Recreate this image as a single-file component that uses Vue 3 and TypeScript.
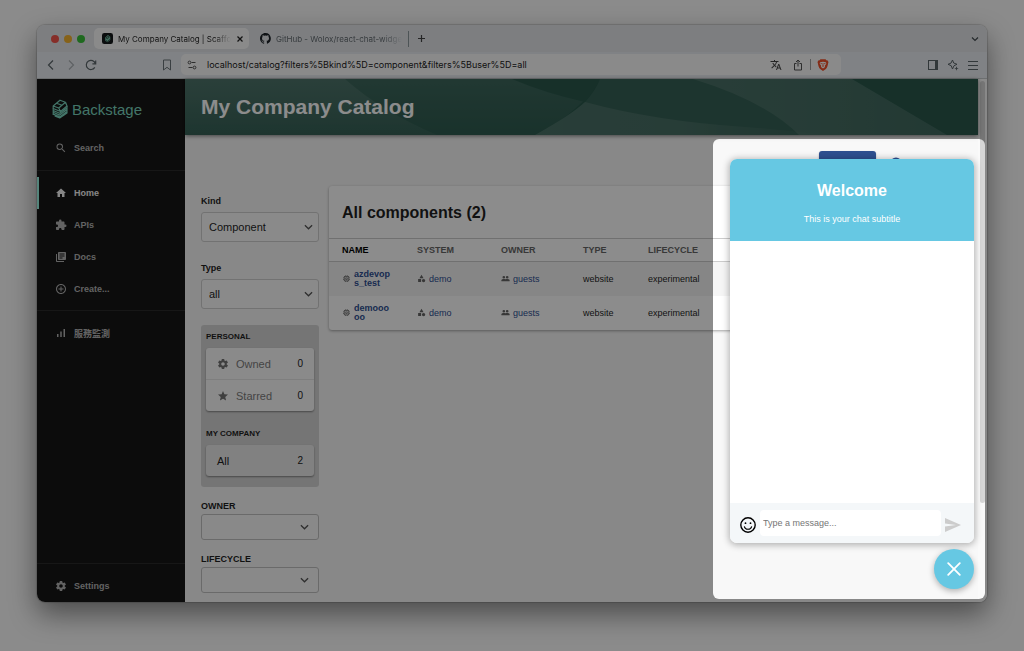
<script setup lang="ts">
import { ref } from 'vue'

interface NavItem { label: string; icon: string; active?: boolean }
interface Row { name: string; system: string; owner: string; type: string; lifecycle: string }

const icons: Record<string, string> = {
  search: 'M15.5 14h-.79l-.28-.27A6.47 6.47 0 0 0 16 9.5 6.5 6.5 0 1 0 9.5 16c1.61 0 3.09-.59 4.23-1.57l.27.28v.79l5 4.99L20.49 19l-4.99-5zm-6 0C7.01 14 5 11.99 5 9.5S7.01 5 9.5 5 14 7.01 14 9.5 11.99 14 9.5 14z',
  home: 'M10 20v-6h4v6h5v-8h3L12 3 2 12h3v8z',
  extension: 'M20.5 11H19V7c0-1.1-.9-2-2-2h-4V3.5a2.5 2.5 0 0 0-5 0V5H4c-1.1 0-1.99.9-1.99 2v3.8H3.5c1.49 0 2.7 1.21 2.7 2.7s-1.21 2.7-2.7 2.7H2V20c0 1.1.9 2 2 2h3.8v-1.5c0-1.49 1.21-2.7 2.7-2.7s2.7 1.21 2.7 2.7V22H17c1.1 0 2-.9 2-2v-4h1.5a2.5 2.5 0 0 0 0-5z',
  docs: 'M4 6H2v14c0 1.1.9 2 2 2h14v-2H4V6zm16-4H8c-1.1 0-2 .9-2 2v12c0 1.1.9 2 2 2h12c1.1 0 2-.9 2-2V4c0-1.1-.9-2-2-2zm-1 9H9V9h10v2zm-4 4H9v-2h6v2zm4-8H9V5h10v2z',
  create: 'M13 7h-2v4H7v2h4v4h2v-4h4v-2h-4V7zm-1-5C6.48 2 2 6.48 2 12s4.48 10 10 10 10-4.48 10-10S17.52 2 12 2zm0 18c-4.41 0-8-3.59-8-8s3.59-8 8-8 8 3.59 8 8-3.59 8-8 8z',
  bars: 'M4 14h3v6H4zM10.500 9h3v11h-3zM17 4h3v16h-3z',
  settings: 'M19.43 12.98c.04-.32.07-.64.07-.98s-.03-.66-.07-.98l2.110-1.650c.19-.15.24-.42.12-.64l-2-3.460c-.12-.22-.39-.3-.61-.22l-2.490 1c-.52-.4-1.080-.73-1.690-.98l-.38-2.650C14.460 2.180 14.250 2 14 2h-4c-.25 0-.46.18-.49.42l-.38 2.650c-.61.25-1.170.59-1.690.98l-2.490-1c-.23-.09-.49 0-.61.22l-2 3.460c-.13.22-.07.49.12.64l2.110 1.650c-.04.32-.07.65-.07.98s.03.66.07.98l-2.110 1.650c-.19.15-.24.42-.12.64l2 3.460c.12.22.39.3.61.22l2.490-1c.52.4 1.080.73 1.690.98l.38 2.650c.03.24.24.42.49.42h4c.25 0 .46-.18.49-.42l.38-2.650c.61-.25 1.170-.59 1.690-.98l2.490 1c.23.09.49 0 .61-.22l2-3.460c.12-.22.07-.49-.12-.64l-2.110-1.650zM12 15.500c-1.930 0-3.500-1.570-3.500-3.500s1.570-3.500 3.500-3.500 3.500 1.570 3.500 3.500-1.570 3.500-3.500 3.500z',
  star: 'M12 17.270L18.180 21l-1.640-7.030L22 9.240l-7.190-.61L12 2 9.190 8.630 2 9.240l5.460 4.730L5.820 21z',
  memory: 'M15 9H9v6h6V9zm-2 4h-2v-2h2v2zm8-2V9h-2V7c0-1.100-.9-2-2-2h-2V3h-2v2h-2V3H9v2H7c-1.100 0-2 .9-2 2v2H3v2h2v2H3v2h2v2c0 1.100.9 2 2 2h2v2h2v-2h2v2h2v-2h2c1.100 0 2-.9 2-2v-2h2v-2h-2v-2h2zm-4 6H7V7h10v10z',
  category: 'M12 2l-5.500 9h11zM17.500 13a4.500 4.500 0 1 0 0 9 4.500 4.500 0 0 0 0-9zM3 13.500h8v8H3z',
  people: 'M16.500 13c-1.200 0-3.070.34-4.500 1-1.430-.67-3.300-1-4.500-1C5.330 13 1 14.080 1 16.250V19h22v-2.750c0-2.170-4.330-3.250-6.500-3.250zM7.500 12a3.500 3.500 0 1 0 0-7 3.500 3.500 0 0 0 0 7zm9 0a3.500 3.500 0 1 0 0-7 3.500 3.500 0 0 0 0 7z',
  translate: 'M12.870 15.070l-2.540-2.510.03-.03A17.520 17.520 0 0 0 14.070 6H17V4h-7V2H8v2H1v2h11.170C11.500 7.920 10.440 9.750 9 11.350 8.070 10.320 7.300 9.190 6.690 8h-2c.73 1.630 1.730 3.170 2.980 4.560l-5.090 5.020L4 19l5-5 3.110 3.110.76-2.040zM18.500 10h-2L12 22h2l1.120-3h4.750L21 22h2l-4.500-12zm-2.620 7l1.620-4.330L19.120 17h-3.240z',
}

const mainNav: NavItem[] = [
  { label: 'Home', icon: 'home', active: true },
  { label: 'APIs', icon: 'extension' },
  { label: 'Docs', icon: 'docs' },
  { label: 'Create...', icon: 'create' },
]

const columns = ['NAME', 'SYSTEM', 'OWNER', 'TYPE', 'LIFECYCLE']
const rows: Row[] = [
  { name: 'azdevops_test', system: 'demo', owner: 'guests', type: 'website', lifecycle: 'experimental' },
  { name: 'demooooo', system: 'demo', owner: 'guests', type: 'website', lifecycle: 'experimental' },
]

const kind = ref('Component')
const type = ref('all')
const message = ref('')
</script>

<template>
  <div class="desktop">
    <div class="window">
      <div class="tabs">
        <span class="lights"><i class="red"></i><i class="yellow"></i><i class="green"></i></span>
        <div class="tab tab-active">
          <svg class="favicon" viewBox="0 0 12 12"><rect width="12" height="12" rx="2.500" fill="#15181a" /><path d="M3.500 5L6.500 2.300 9 4v3.500L6 10 3.500 8.500z" fill="#79c9ae" /><path d="M4.500 5.300l2.200-1.700 1.200.9-2.200 1.800zM4 8l2 1.200 2.700-2.200" fill="none" stroke="#15181a" stroke-width=".7" /></svg>
          <span class="tab-text">My Company Catalog | Scaffo</span>
          <button class="plain" aria-label="Close tab"><svg width="8" height="8" viewBox="0 0 8 8"><path d="M1.500 1.500l5 5M6.500 1.500l-5 5" stroke="#222" stroke-width="1.300" /></svg></button>
        </div>
        <div class="tab tab-idle">
          <svg class="favicon" viewBox="0 0 16 16"><path fill="#1d2227" d="M8 0C3.580 0 0 3.580 0 8c0 3.540 2.290 6.530 5.470 7.590.4.070.55-.17.55-.38v-1.490c-2.230.48-2.700-1.070-2.700-1.070-.36-.92-.89-1.170-.89-1.170-.73-.5.050-.49.050-.49.8.060 1.230.83 1.230.83.71 1.220 1.870.87 2.330.66.070-.52.28-.87.51-1.070-1.780-.2-3.640-.89-3.640-3.950 0-.87.31-1.590.82-2.150-.08-.2-.36-1.020.08-2.120 0 0 .67-.21 2.200.82a7.600 7.600 0 0 1 4 0c1.530-1.040 2.200-.82 2.200-.82.44 1.100.16 1.920.08 2.120.51.56.82 1.270.82 2.150 0 3.070-1.870 3.750-3.650 3.950.29.25.54.73.54 1.480v2.200c0 .21.15.46.55.38A8 8 0 0 0 8 0z" /></svg>
          <span class="tab-text">GitHub - Wolox/react-chat-widge</span>
        </div>
        <button class="plain new-tab" aria-label="New tab"><svg width="9" height="9" viewBox="0 0 9 9"><path d="M4.500 1v7M1 4.500h7" stroke="#444" stroke-width="1.200" /></svg></button>
        <button class="plain tab-menu" aria-label="Search tabs"><svg width="8" height="8" viewBox="0 0 8 8"><path d="M1 2.500l3 3 3-3" fill="none" stroke="#444b50" stroke-width="1.200" /></svg></button>
      </div>

      <div class="toolbar">
        <button class="plain" aria-label="Back"><svg width="12" height="12" viewBox="0 0 12 12"><path d="M8 1.500L3.500 6 8 10.500" fill="none" stroke="#5c666b" stroke-width="1.200" /></svg></button>
        <button class="plain" aria-label="Forward"><svg width="12" height="12" viewBox="0 0 12 12"><path d="M4 1.500L8.500 6 4 10.500" fill="none" stroke="#aab0b5" stroke-width="1.200" /></svg></button>
        <button class="plain" aria-label="Reload"><svg width="12" height="12" viewBox="0 0 12 12"><path d="M9.800 8.400A4.600 4.600 0 1 1 10.300 4.500M10.700 1.600v3.300H7.400" fill="none" stroke="#5c666b" stroke-width="1.200" /></svg></button>
        <button class="plain bookmark" aria-label="Bookmark"><svg width="12" height="12" viewBox="0 0 12 12"><path d="M2.500 1h7v10L6 8.300 2.500 11z" fill="none" stroke="#6b7479" /></svg></button>
        <div class="address">
          <svg width="10" height="10" viewBox="0 0 10 10" fill="none" stroke="#555"><path d="M4.500 2.500H8.500M1.500 7.500h4" /><circle cx="2.500" cy="2.500" r="1.400" /><circle cx="7.500" cy="7.500" r="1.400" /></svg>
          <input class="url" aria-label="Address" value="localhost/catalog?filters%5Bkind%5D=component&amp;filters%5Buser%5D=all" />
          <button class="plain" aria-label="Translate"><svg width="12" height="12" viewBox="0 0 24 24"><path :d="icons.translate" fill="#444" /></svg></button>
          <button class="plain" aria-label="Share"><svg width="12" height="12" viewBox="0 0 12 12" fill="none" stroke="#555"><path d="M4.500 4.500H2.500v6.500h7V4.500h-2M6 7.500V1M4 3l2-2 2 2" /></svg></button>
          <span class="bar"></span>
          <button class="plain" aria-label="Shields"><svg width="12" height="12" viewBox="0 0 12 12"><path d="M3.500.3h5L9.800 1.500l1 .1.700 1.600-.3.900c-.5 3-1.200 5-2.300 6L6 12 3.100 10.100C2 9.100 1.300 7.100.8 4.100l-.3-.9.700-1.600 1-.1z" fill="#f0502a" /><path d="M3 3.200l3-.4 3 .4.300 1.600-1.500 2L8 8 6 9.500 4 8l.2-1.200-1.500-2z" fill="#fff" /><path d="M3.500 4.300l1.500.5M8.500 4.300L7 4.800M6 4v2.800M5 7.400l1-.6 1 .6" stroke="#f0502a" stroke-width=".8" fill="none" /></svg></button>
        </div>
        <span class="tools">
          <button class="plain" aria-label="Side panel"><svg width="12" height="12" viewBox="0 0 12 12"><rect x="1.500" y="1.500" width="9" height="9" fill="none" stroke="#5c666b" /><path d="M8 2h3v8H8z" fill="#5c666b" /></svg></button>
          <button class="plain" aria-label="Assistant"><svg width="12" height="12" viewBox="0 0 12 12"><path d="M5.500 1l1.200 3L10 5.300 7 6.700 5.500 10 4.200 6.700 1 5.300l3-1.200z" fill="none" stroke="#5c666b" /><path d="M9.500 7.300l.6 1.600 1.600.6-1.600.6-.6 1.600-.6-1.600-1.600-.6 1.600-.6z" fill="#5c666b" /></svg></button>
          <button class="plain" aria-label="Menu"><svg width="12" height="12" viewBox="0 0 12 12"><path d="M1 2.500h10M1 6.500h10M1 10.500h10" stroke="#5c666b" /></svg></button>
        </span>
      </div>

      <div class="viewport">
        <nav class="sidebar">
          <a class="logo" href="#">
            <svg width="16" height="20" viewBox="0 0 16 20" fill="none" stroke-width="1.200" stroke-linejoin="round"><path d="M1.200 7L8 1.200l5.500 2L15 7l-6.500 5.500L1.200 9.500zM1.200 7l5.500 2 6.800-5.800M6.700 9l1.800 3.500M4.500 4.200l5.500 2" /><path d="M1.200 11.500l6.500 2.800L15 8.800M1.200 13.300l6.500 2.800 7.300-5.500M1.200 15.100l6.500 2.800 7.300-5.500M1.200 9.500v6.500M15 7v7l-7.300 5-5-2" /></svg>
            <span>Backstage</span>
          </a>
          <a class="nav-item" href="#"><svg class="nav-icon" viewBox="0 0 24 24"><path :d="icons.search" /></svg>Search</a>
          <hr />
          <a v-for="item in mainNav" :key="item.label" class="nav-item" :class="{ active: item.active }" href="#">
            <svg class="nav-icon" viewBox="0 0 24 24"><path :d="icons[item.icon]" /></svg>{{ item.label }}
          </a>
          <hr class="low" />
          <a class="nav-item" href="#"><svg class="nav-icon" viewBox="0 0 24 24"><path :d="icons.bars" /></svg>服務監測</a>
          <span class="spacer"></span>
          <hr />
          <a class="nav-item" href="#"><svg class="nav-icon" viewBox="0 0 24 24"><path :d="icons.settings" /></svg>Settings</a>
        </nav>

        <div class="main">
          <header class="banner">
            <svg class="waves" viewBox="0 0 793 56" preserveAspectRatio="none">
              <defs>
                <linearGradient id="fade-a" x1="0" y1="0" x2="0" y2="1"><stop offset="0" stop-color="#fff" stop-opacity=".09" /><stop offset="1" stop-color="#fff" stop-opacity=".04" /></linearGradient>
                <linearGradient id="fade-b" x1="0" y1="0" x2="0" y2="1"><stop offset="0" stop-color="#fff" stop-opacity=".09" /><stop offset="1" stop-color="#fff" stop-opacity=".02" /></linearGradient>
                <linearGradient id="fade-c" x1="0" y1="0" x2="1" y2="0"><stop offset="0" stop-color="#fff" stop-opacity=".1" /><stop offset=".5" stop-color="#fff" stop-opacity=".09" /><stop offset="1" stop-color="#fff" stop-opacity="0" /></linearGradient>
                <linearGradient id="fade-e" x1="0" y1="0" x2="1" y2="0"><stop offset="0" stop-color="#fff" stop-opacity=".1" /><stop offset=".5" stop-color="#fff" stop-opacity=".08" /><stop offset="1" stop-color="#fff" stop-opacity=".05" /></linearGradient>
              </defs>
              <path d="M0 0H160Q196 32 252 56H0z" fill="url(#fade-a)" />
              <path d="M0 0H415Q397 32 350 56H0z" fill="url(#fade-b)" />
              <path d="M415 0H667L762 56H350Q386 36 400 23Q410 12 415 0z" fill="#fff" fill-opacity=".06" />
              <path d="M400 23Q470 42 560 48Q600 51 640 56H350Q386 36 400 23z" fill="url(#fade-c)" />
              <path d="M508 0H667L762 56H614Q580 22 508 0z" fill="url(#fade-e)" />
              <path d="M327 0H415Q410 12 400 23Q360 14 327 0z" fill="#2a584c" />
            </svg>
            <h1>My Company Catalog</h1>
          </header>

          <div class="content">
            <div class="actions">
              <button class="create" aria-label="Create"></button>
              <button class="plain support" aria-label="Support"><svg width="12" height="12" viewBox="0 0 12 12"><circle cx="6" cy="6" r="4.800" fill="none" stroke="#2e4f92" stroke-width="1.500" /></svg></button>
            </div>
            <div class="columns">
              <aside class="filters">
                <label class="field"><span>Kind</span>
                  <span class="pick"><select v-model="kind"><option>Component</option></select><svg viewBox="0 0 10 10"><path d="M1 3l4 4 4-4" /></svg></span>
                </label>
                <label class="field"><span>Type</span>
                  <span class="pick"><select v-model="type"><option>all</option></select><svg viewBox="0 0 10 10"><path d="M1 3l4 4 4-4" /></svg></span>
                </label>
                <section class="lists">
                  <h3>PERSONAL</h3>
                  <div class="card">
                    <button class="entry muted"><svg viewBox="0 0 24 24"><path :d="icons.settings" /></svg>Owned<b>0</b></button>
                    <button class="entry muted"><svg viewBox="0 0 24 24"><path :d="icons.star" /></svg>Starred<b>0</b></button>
                  </div>
                  <h3>MY COMPANY</h3>
                  <div class="card chosen"><button class="entry">All<b>2</b></button></div>
                </section>
                <label class="field compact"><span>OWNER</span>
                  <span class="pick"><select><option></option></select><svg viewBox="0 0 10 10"><path d="M1 3l4 4 4-4" /></svg></span>
                </label>
                <label class="field compact"><span>LIFECYCLE</span>
                  <span class="pick"><select><option></option></select><svg viewBox="0 0 10 10"><path d="M1 3l4 4 4-4" /></svg></span>
                </label>
              </aside>

              <section class="paper">
                <h2>All components (2)</h2>
                <table>
                  <colgroup><col class="c-name" /><col class="c-system" /><col class="c-owner" /><col class="c-type" /><col /></colgroup>
                  <thead><tr><th v-for="c in columns" :key="c" scope="col">{{ c }}</th></tr></thead>
                  <tbody>
                    <tr v-for="r in rows" :key="r.name">
                      <td><a class="ref name" href="#"><svg viewBox="0 0 24 24"><path :d="icons.memory" /></svg><span>{{ r.name }}</span></a></td>
                      <td><a class="ref" href="#"><svg viewBox="0 0 24 24"><path :d="icons.category" /></svg><span>{{ r.system }}</span></a></td>
                      <td><a class="ref" href="#"><svg viewBox="0 0 24 24"><path :d="icons.people" /></svg><span>{{ r.owner }}</span></a></td>
                      <td>{{ r.type }}</td>
                      <td>{{ r.lifecycle }}</td>
                    </tr>
                  </tbody>
                </table>
              </section>
            </div>
          </div>
        </div>
        <div class="scrollbar"><span></span></div>
      </div>

      <div class="widget">
        <section class="chat">
          <header>
            <h4>Welcome</h4>
            <p>This is your chat subtitle</p>
          </header>
          <div class="messages"></div>
          <form class="sender" @submit.prevent>
            <button class="plain" type="button" aria-label="Emoji"><svg width="16" height="16" viewBox="0 0 16 16" fill="none" stroke="#000" stroke-width="1.400"><circle cx="8" cy="8" r="7.200" /><path d="M4.300 9.300a3.800 3.800 0 0 0 7.400 0" stroke-width="1.100" /><circle cx="5.500" cy="6.200" r=".9" fill="#000" stroke="none" /><circle cx="10.500" cy="6.200" r=".9" fill="#000" stroke="none" /></svg></button>
            <input v-model="message" placeholder="Type a message..." aria-label="Message" />
            <button class="plain" type="submit" aria-label="Send"><svg width="16" height="14" viewBox="0 0 16 14"><path d="M0 0l16 7-16 7V8.500L11 7 0 5.500z" fill="#ccc" /></svg></button>
          </form>
        </section>
        <button class="launcher" aria-label="Close chat"><svg width="14" height="14" viewBox="0 0 14 14"><path d="M1.200 1.200l11.600 11.600M12.800 1.200L1.200 12.800" stroke="#fff" stroke-width="1.800" stroke-linecap="round" /></svg></button>
      </div>
    </div>
    <div class="spotlight"></div>
  </div>
</template>

<style>
body { margin: 0; }
</style>

<style scoped>
* { box-sizing: border-box; }
.desktop {
  position: relative;
  display: flex;
  min-height: 100vh;
  padding: 25px 37px 49px;
  overflow: hidden;
  background: #fdfdfd;
  font-family: "Liberation Sans", "Noto Sans CJK TC", Arial, sans-serif;
  font-size: 9px;
  color: #1f1f1f;
}
.window {
  position: relative;
  display: flex;
  flex: 1;
  flex-direction: column;
  min-width: 0;
  overflow: hidden;
  border-radius: 8px;
  background: #f8f8f8;
  box-shadow: 0 0 1px 1px rgba(0, 0, 0, .15), 0 12px 28px rgba(0, 0, 0, .45);
}
h1, h2, h3, h4, p { margin: 0; }
svg { display: block; flex: none; }
button, input, select { font: inherit; color: inherit; }
a { color: inherit; text-decoration: none; }
.plain { display: flex; padding: 0; border: 0; background: none; }

.tabs {
  display: flex;
  align-items: center;
  height: 27px;
  padding: 0 8px 0 14px;
  background: #e3e6ea;
  font-family: Inter, sans-serif;
  font-size: 8px;
}
.lights { display: flex; gap: 5px; width: 43px; }
.lights i { width: 8px; height: 8px; border-radius: 50%; }
.red { background: #f4554b; }
.yellow { background: #f5b32e; }
.green { background: #39c03a; }
.tab { display: flex; align-items: center; gap: 5px; height: 21px; padding: 0 6px 0 8px; border-radius: 5px; }
.tab-active { width: 155px; background: #fcfcfc; }
.tab-idle { width: 160px; padding-left: 11px; border-right: 1px solid #8d9a9d; border-radius: 0; height: 16px; color: #666d72; }
.favicon { width: 11px; height: 11px; }
.tab-text {
  flex: 1;
  white-space: nowrap;
  mask-image: linear-gradient(90deg, #000 85%, transparent);
}
.new-tab { margin-left: 8px; }
.tab-menu { margin-left: auto; }

.toolbar {
  display: flex;
  align-items: center;
  gap: 8px;
  height: 27px;
  padding: 0 8px 1px;
  border-bottom: 1px solid #c6cacd;
  background: #eaedf2;
}
.bookmark { margin-left: 56px; }
.toolbar .address {
  display: flex;
  flex: 1;
  align-items: center;
  gap: 10px;
  max-width: 660px;
  height: 21px;
  padding: 0 12px 0 6px;
  border-radius: 5px;
  background: #fcfcfc;
}
.url {
  flex: 1;
  min-width: 0;
  padding: 0;
  border: 0;
  outline: 0;
  background: none;
  font-family: Inter, sans-serif;
  font-size: 9px;
  color: #222;
}
.bar { width: 1px; height: 11px; margin: 0 -4px; background: #a5a5a5; }
.tools { display: flex; gap: 8px; margin-left: auto; }

.viewport { display: flex; flex: 1; }
.sidebar {
  display: flex;
  flex-direction: column;
  width: 148px;
  background: #171717;
  font-weight: 700;
  color: #b5b5b5;
}
.logo {
  display: flex;
  align-items: center;
  gap: 4px;
  height: 53px;
  padding: 7px 0 0 15px;
  font-size: 15px;
  font-weight: 400;
  color: #7bd6bf;
}
.logo svg { stroke: #7bd6bf; }
.nav-item { display: flex; align-items: center; gap: 7px; height: 32px; padding-left: 18px; }
.nav-item.active { padding-left: 16px; border-left: 2px solid #9bf0e1; color: #f4f4f4; }
.nav-icon { width: 12px; height: 12px; fill: currentColor; }
.sidebar hr { width: 100%; height: 1px; margin: 6px 0; border: 0; background: #2a2a2a; }
.sidebar .low { margin-top: 5px; }
.spacer { flex: 1; }

.main { display: flex; flex: 1; flex-direction: column; min-width: 0; }
.banner {
  position: relative;
  display: flex;
  align-items: center;
  height: 56px;
  padding-left: 16px;
  background: #2a584c;
  box-shadow: 0 1px 4px rgba(0, 0, 0, .5);
  color: #fff;
}
.waves { position: absolute; inset: 0; width: 100%; height: 100%; }
.banner h1 { position: relative; font-size: 21px; line-height: 26px; }
.content { flex: 1; padding: 16px 16px 8px; }
.actions { display: flex; height: 35px; justify-content: flex-end; align-items: flex-start; }
.create { width: 57px; height: 24px; border: 0; border-radius: 3px; background: #2e5090; box-shadow: 0 1px 2px rgba(0, 0, 0, .3); }
.support { margin: 6px 60px 0 14px; }
.columns { display: flex; align-items: flex-start; gap: 10px; }
.filters { width: 118px; flex: none; padding-top: 9px; }
.field { display: flex; flex-direction: column; gap: 5px; margin-bottom: 20px; font-weight: 700; line-height: 12px; }
.pick { position: relative; display: flex; }
.pick select {
  width: 100%;
  height: 30px;
  padding: 0 7px;
  border: 1px solid #d0d0d0;
  border-radius: 3px;
  outline: 0;
  appearance: none;
  background: #fcfcfc;
  font-size: 11px;
  font-weight: 400;
}
.pick svg { position: absolute; right: 6px; top: 50%; width: 9px; height: 10px; margin-top: -5px; fill: none; stroke: #555; stroke-width: 1.400; pointer-events: none; }
.filters .field:nth-of-type(2) { margin-bottom: 16px; }
.compact { gap: 2px; margin-bottom: 13px; }
.compact:last-child { margin-bottom: 0; }
.compact .pick select { height: 26px; border-color: #c2c2c2; background: #f9f9f9; }
.compact .pick svg { right: 10px; }
.lists { margin-bottom: 13px; padding: 6px 5px 11px; border-radius: 3px; background: #d6d6d6; }
.lists h3 { margin-bottom: 5px; font-size: 8px; line-height: 12px; }
.card { margin-bottom: 17px; overflow: hidden; border-radius: 3px; background: #fcfcfc; box-shadow: 0 1px 2px rgba(0, 0, 0, .4); }
.card.chosen { margin-bottom: 0; background: #ebebeb; }
.entry {
  display: flex;
  align-items: center;
  width: 100%;
  height: 31px;
  padding: 0 11px;
  border: 0;
  background: none;
  font-size: 11px;
}
.entry + .entry { height: 32px; border-top: 1px solid #e6e6e6; }
.entry svg { width: 12px; height: 12px; margin-right: 7px; fill: #737373; }
.entry b { margin-left: auto; font-size: 10px; font-weight: 400; color: #222; }
.muted { color: #7d7d7d; }

.paper {
  flex: 1;
  min-width: 0;
  border-radius: 3px;
  background: #fff;
  box-shadow: 0 1px 3px rgba(0, 0, 0, .35);
}
.paper h2 { padding: 17px 13px 15px; font-size: 16px; line-height: 20px; }
table { width: 100%; table-layout: fixed; border-collapse: collapse; }
.c-name { width: 75px; }
.c-system { width: 84px; }
.c-owner { width: 82px; }
.c-type { width: 65px; }
thead tr { height: 23px; border: solid #ccc; border-width: 1px 0; }
th { padding: 0 0 0 13px; text-align: left; color: #666; }
th:first-child { color: #000; }
tbody tr { height: 34px; }
tbody tr:first-child { background: #f5f5f5; }
td { padding: 0 0 0 13px; }
td:first-child { padding-right: 10px; }
.ref { display: flex; align-items: center; gap: 3px; color: #2e4f92; }
.ref svg { width: 9px; height: 9px; fill: #666; }
.name { font-weight: 700; line-height: 9px; word-break: break-all; }
.scrollbar { display: flex; justify-content: center; width: 9px; padding: 2px 0 99px; background: #fafafa; }
.scrollbar span { width: 5px; border-radius: 3px; background: #d6d6d6; }

.widget {
  position: absolute;
  right: 13px;
  bottom: 13px;
  display: flex;
  flex-direction: column;
  align-items: flex-end;
  gap: 6px;
}
.chat { width: 244px; overflow: hidden; border-radius: 7px; background: #fff; box-shadow: 0 1px 7px 1px rgba(0, 0, 0, .3); }
.chat header { padding: 22px 0 16px; background: #66c8e3; color: #fff; text-align: center; }
.chat h4 { font-size: 16px; line-height: 20px; }
.chat p { margin-top: 12px; line-height: 12px; }
.messages { height: 262px; }
.sender { display: flex; align-items: center; gap: 4px; height: 40px; padding: 0 13px 0 10px; background: #f4f7f9; }
.sender .plain { margin-top: 3px; }
.sender input { flex: 1; min-width: 0; height: 26px; padding: 0 3px; border: 0; border-radius: 4px; outline: 0; background: #fff; }
.sender input::placeholder { color: #757575; opacity: 1; }
.launcher {
  display: flex;
  align-items: center;
  justify-content: center;
  width: 40px;
  height: 40px;
  padding: 0;
  border: 0;
  border-radius: 50%;
  background: #66c8e3;
  box-shadow: 0 2px 6px rgba(0, 0, 0, .3);
}
.spotlight {
  position: absolute;
  right: 39px;
  bottom: 52px;
  width: 272px;
  height: 460px;
  border-radius: 6px;
  box-shadow: 0 0 0 2000px rgba(0, 0, 0, .45);
  pointer-events: none;
}
</style>
